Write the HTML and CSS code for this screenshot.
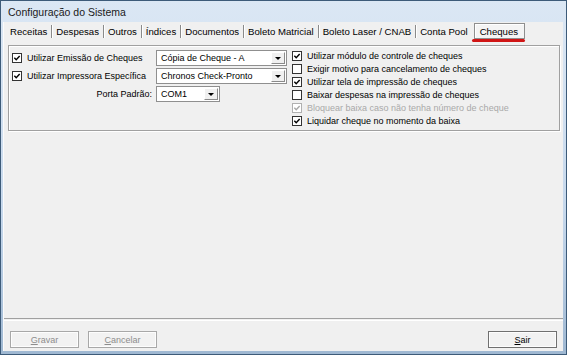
FILE: index.html
```html
<!DOCTYPE html>
<html lang="pt-BR">
<head>
    <meta charset="UTF-8">
    <title>Configuração do Sistema</title>
    <link rel="stylesheet" href="styles.css">
</head>
<body>

<div class="window">
    <div class="titlebar">Configuração do Sistema</div>

    <div class="client">
        <!-- Tab strip -->
        <div class="tabs">
            <span class="tab">Receitas</span><span class="sep"></span>
            <span class="tab">Despesas</span><span class="sep"></span>
            <span class="tab">Outros</span><span class="sep"></span>
            <span class="tab">Índices</span><span class="sep"></span>
            <span class="tab">Documentos</span><span class="sep"></span>
            <span class="tab">Boleto Matricial</span><span class="sep"></span>
            <span class="tab">Boleto Laser / CNAB</span><span class="sep"></span>
            <span class="tab">Conta Pool</span>
            <span class="tab active">Cheques</span>
        </div>

        <!-- Cheques page -->
        <div class="page">
            <div class="group">
                <div class="left-col">
                    <label class="field">
                        <span class="cb checked"><svg viewBox="0 0 9 9"><path d="M1.5 4.2 L3.6 6.4 L7.5 2.2"/></svg></span>
                        Utilizar Emissão de Cheques
                    </label>
                    <div class="combo wide"><span class="value">Cópia de Cheque - A</span><span class="arrow"></span></div>

                    <label class="field">
                        <span class="cb checked"><svg viewBox="0 0 9 9"><path d="M1.5 4.2 L3.6 6.4 L7.5 2.2"/></svg></span>
                        Utilizar Impressora Específica
                    </label>
                    <div class="combo wide"><span class="value">Chronos Check-Pronto</span><span class="arrow"></span></div>

                    <label class="field right">Porta Padrão:</label>
                    <div class="combo short"><span class="value">COM1</span><span class="arrow"></span></div>
                </div>

                <div class="right-col">
                    <label class="check">
                        <span class="cb checked"><svg viewBox="0 0 9 9"><path d="M1.5 4.2 L3.6 6.4 L7.5 2.2"/></svg></span>
                        Utilizar módulo de controle de cheques
                    </label>
                    <label class="check">
                        <span class="cb"></span>
                        Exigir motivo para cancelamento de cheques
                    </label>
                    <label class="check">
                        <span class="cb checked"><svg viewBox="0 0 9 9"><path d="M1.5 4.2 L3.6 6.4 L7.5 2.2"/></svg></span>
                        Utilizar tela de impressão de cheques
                    </label>
                    <label class="check">
                        <span class="cb"></span>
                        Baixar despesas na impressão de cheques
                    </label>
                    <label class="check disabled">
                        <span class="cb checked"><svg viewBox="0 0 9 9"><path d="M1.5 4.2 L3.6 6.4 L7.5 2.2"/></svg></span>
                        Bloquear baixa caso não tenha número de cheque
                    </label>
                    <label class="check">
                        <span class="cb checked"><svg viewBox="0 0 9 9"><path d="M1.5 4.2 L3.6 6.4 L7.5 2.2"/></svg></span>
                        Liquidar cheque no momento da baixa
                    </label>
                </div>
            </div>
        </div>

        <!-- Bottom buttons -->
        <div class="footer">
            <button class="btn" disabled><u>G</u>ravar</button>
            <button class="btn" disabled><u>C</u>ancelar</button>
            <span class="spacer"></span>
            <button class="btn"><u>S</u>air</button>
        </div>
    </div>
</div>

</body>
</html>
```

FILE: styles.css
```css
* {
    box-sizing: border-box;
}
body {
    margin: 0;
    font-family: "Liberation Sans", Arial, sans-serif;
    font-size: 9px;
    color: #000;
    background: #fff;
}
.window {
    width: 567px;
    height: 355px;
    border: 1px solid #3d5b79;
    background: linear-gradient(#dbe7f4, #c6d8ec 60%, #9fb8d2);
    padding: 0 3px 3px 2px;
    display: flex;
    flex-direction: column;
}
.titlebar {
    height: 21px;
    padding-left: 5px;
    font-size: 10.5px;
    color: #1a1a1a;
    display: flex;
    align-items: center;
}
.client {
    flex: 1;
    background: #f0f0f0;
    display: flex;
    flex-direction: column;
    border-left: 1px solid #fbfbfb;
}

/* tabs */
.tabs {
    height: 22px;
    display: flex;
    align-items: flex-start;
    padding-left: 2px;
    font-size: 9.6px;
}
.tab {
    height: 16px;
    margin-top: 2px;
    line-height: 16px;
    padding: 0 4px;
    white-space: nowrap;
}
.sep {
    width: 1px;
    height: 13px;
    margin-top: 3px;
    background: #8a8a8a;
    box-shadow: 1px 0 0 #fff;
}
.tab.active {
    position: relative;
    margin-left: 2px;
    margin-top: 1px;
    padding: 0 6px 0 5px;
    border: 1px solid #8e8e8e;
    box-shadow: inset 1px 1px 0 #fff;
    background: #f4f4f4;
}
.tab.active::after {
    content: "";
    position: absolute;
    left: -3px;
    right: -1px;
    bottom: -4px;
    height: 3px;
    border-radius: 2px;
    background: #d01515;
}

/* page */
.page {
    flex: 1;
    padding: 1px 3px 0 4px;
    border-bottom: 1px solid #a0a0a0;
}
.group {
    height: 86px;
    border: 1px solid #a0a0a0;
    box-shadow: inset 1px 1px 0 #fff, 1px 1px 0 #fff;
    display: flex;
}
.left-col {
    padding: 4px 0 0 3px;
    width: 283px;
    display: grid;
    grid-template-columns: 144px 1fr;
    grid-auto-rows: 16px;
    row-gap: 2px;
    align-content: start;
}
.field {
    display: flex;
    align-items: center;
    gap: 5px;
    white-space: nowrap;
}
.field.right {
    justify-content: flex-end;
    padding-right: 4px;
}
.combo {
    height: 16px;
    border: 1px solid #8f8f8f;
    background: #fff;
    display: flex;
    align-items: center;
    padding: 1px;
}
.combo.wide {
    width: 131px;
}
.combo.short {
    width: 64px;
}
.combo .value {
    flex: 1;
    padding-left: 3px;
    white-space: nowrap;
}
.arrow {
    width: 14px;
    height: 12px;
    background: #f0f0f0;
    border: 1px solid #fff;
    border-right-color: #8a8a8a;
    border-bottom-color: #8a8a8a;
    position: relative;
}
.arrow::after {
    content: "";
    position: absolute;
    left: 3px;
    top: 4px;
    border-left: 3px solid transparent;
    border-right: 3px solid transparent;
    border-top: 3px solid #000;
}

.right-col {
    padding: 3px 0 0 0;
    display: flex;
    flex-direction: column;
}
.check {
    height: 13px;
    display: flex;
    align-items: center;
    gap: 5px;
    white-space: nowrap;
}
.check.disabled {
    color: #a9a9a9;
}

/* checkbox */
.cb {
    width: 10px;
    height: 10px;
    border: 1px solid #333;
    background: #fff;
    display: inline-block;
    flex: none;
}
.cb svg {
    display: block;
    width: 8px;
    height: 8px;
}
.cb path {
    fill: none;
    stroke: #000;
    stroke-width: 1.6;
}
.disabled .cb {
    border-color: #b0b0b0;
}
.disabled .cb path {
    stroke: #a8a8a8;
}

/* footer */
.footer {
    height: 31px;
    margin-top: 1px;
    border-top: 1px solid #fff;
    padding: 10px 6px 3px 6px;
    display: flex;
    align-items: flex-start;
    gap: 9px;
}
.spacer {
    flex: 1;
}
.btn {
    width: 69px;
    height: 17px;
    padding: 0;
    font-family: "Liberation Sans", Arial, sans-serif;
    font-size: 9px;
    color: #000;
    background: #f2f2f2;
    border: 1px solid #707070;
    box-shadow: inset 0 0 0 1px #fdfdfd;
    border-radius: 0;
}
.btn:disabled {
    color: #8d8d8d;
    border-color: #a8a8a8;
}
```
